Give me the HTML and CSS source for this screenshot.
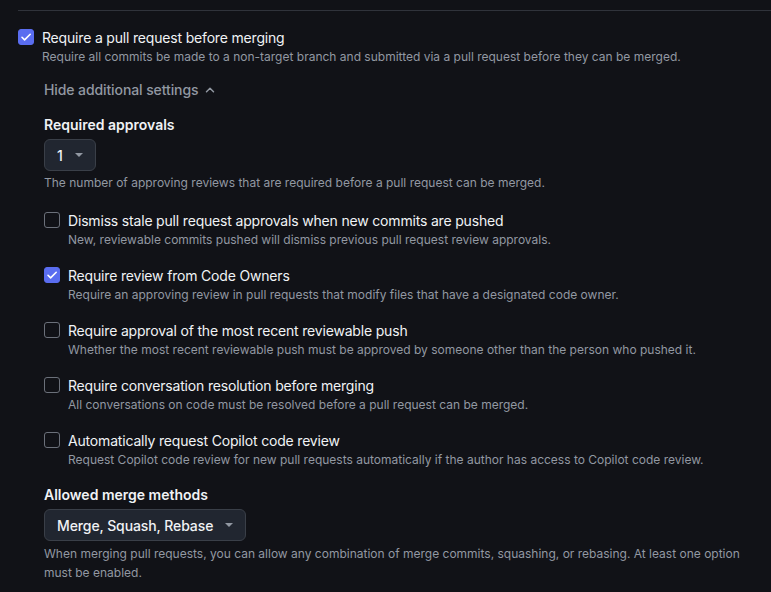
FILE: index.html
```html
<!DOCTYPE html>
<html lang="en">
<head>
<meta charset="utf-8">
<title>Branch protection</title>
<link rel="stylesheet" href="styles.css">
</head>
<body>
<div class="page">
  <div class="divider"></div>
  <div class="main-row">
    <span class="cb checked"><svg viewBox="0 0 16 16" width="16" height="16"><path d="M4 8.3l2.6 2.6L12.2 5.3" fill="none" stroke="#fff" stroke-width="1.6" stroke-linecap="round" stroke-linejoin="round"/></svg></span>
    <div class="main-body">
      <div class="title">Require a pull request before merging</div>
      <div class="desc">Require all commits be made to a non-target branch and submitted via a pull request before they can be merged.</div>
    </div>
  </div>
  <div class="inner">
    <div class="toggle">Hide additional settings <svg class="chev" viewBox="0 0 12 12" width="12" height="12"><path d="M2.5 7.8L6 4.3l3.5 3.5" fill="none" stroke="currentColor" stroke-width="1.5" stroke-linecap="round" stroke-linejoin="round"/></svg></div>

    <div class="heading">Required approvals</div>
    <button class="select"><span>1</span><span class="caret"></span></button>
    <div class="desc note">The number of approving reviews that are required before a pull request can be merged.</div>

    <div class="opts">
      <div class="opt">
        <span class="cb"></span>
        <div>
          <div class="title">Dismiss stale pull request approvals when new commits are pushed</div>
          <div class="desc">New, reviewable commits pushed will dismiss previous pull request review approvals.</div>
        </div>
      </div>
      <div class="opt">
        <span class="cb checked"><svg viewBox="0 0 16 16" width="16" height="16"><path d="M4 8.3l2.6 2.6L12.2 5.3" fill="none" stroke="#fff" stroke-width="1.6" stroke-linecap="round" stroke-linejoin="round"/></svg></span>
        <div>
          <div class="title">Require review from Code Owners</div>
          <div class="desc">Require an approving review in pull requests that modify files that have a designated code owner.</div>
        </div>
      </div>
      <div class="opt">
        <span class="cb"></span>
        <div>
          <div class="title">Require approval of the most recent reviewable push</div>
          <div class="desc">Whether the most recent reviewable push must be approved by someone other than the person who pushed it.</div>
        </div>
      </div>
      <div class="opt">
        <span class="cb"></span>
        <div>
          <div class="title">Require conversation resolution before merging</div>
          <div class="desc">All conversations on code must be resolved before a pull request can be merged.</div>
        </div>
      </div>
      <div class="opt">
        <span class="cb"></span>
        <div>
          <div class="title">Automatically request Copilot code review</div>
          <div class="desc">Request Copilot code review for new pull requests automatically if the author has access to Copilot code review.</div>
        </div>
      </div>
    </div>

    <div class="heading merge-h">Allowed merge methods</div>
    <button class="select"><span>Merge, Squash, Rebase</span><span class="caret"></span></button>
    <div class="desc note wrap">When merging pull requests, you can allow any combination of merge commits, squashing, or rebasing. At least one option must be enabled.</div>
  </div>
</div>
</body>
</html>
```
FILE: styles.css
```css
html, body {
  margin: 0;
  padding: 0;
  background: #111217;
}
body {
  font-family: Inter, "Noto Sans", "Liberation Sans", sans-serif;
  color: #eef0f4;
  font-size: 14px;
}
.page {
  padding-left: 18px;
  width: 753px;
  overflow: hidden;
}
.divider {
  margin-top: 10px;
  height: 1px;
  background: #30333b;
}
.main-row {
  display: flex;
  gap: 8px;
  margin-top: 17px;
}
.cb {
  flex: none;
  width: 16px;
  height: 16px;
  box-sizing: border-box;
  border: 1px solid #6b707a;
  border-radius: 3px;
  display: block;
  margin-top: 1px;
}
.cb.checked {
  background: #5a6df0;
  border-color: #5a6df0;
}
.cb svg {
  display: block;
  margin: -1px;
}
.title {
  font-size: 14px;
  line-height: 20px;
  font-weight: 400;
  letter-spacing: -0.18px;
  color: #f0f2f5;
  white-space: nowrap;
}
.desc {
  font-size: 12px;
  line-height: 18px;
  color: #9298a2;
  white-space: nowrap;
}
.inner {
  margin-left: 26px;
}
.toggle {
  margin-top: 14px;
  font-size: 14px;
  line-height: 20px;
  font-weight: 500;
  letter-spacing: -0.1px;
  color: #9298a2;
  display: flex;
  align-items: center;
  gap: 6px;
}
.chev {
  display: block;
}
.heading {
  margin-top: 15px;
  font-weight: 600;
  font-size: 14px;
  line-height: 20px;
  color: #f0f2f5;
}
.select {
  margin-top: 4px;
  height: 32px;
  display: inline-flex;
  align-items: center;
  gap: 12px;
  padding: 0 12px;
  background: #212630;
  border: 1px solid #3a3f48;
  border-radius: 6px;
  color: #f0f2f5;
  font-family: inherit;
  font-size: 14px;
  font-weight: 500;
  letter-spacing: -0.1px;
}
.caret {
  width: 0;
  height: 0;
  border-left: 4px solid transparent;
  border-right: 4px solid transparent;
  border-top: 4px solid #9298a2;
}
.note {
  margin-top: 3px;
}
.opts {
  margin-top: 19px;
  display: flex;
  flex-direction: column;
  gap: 17px;
}
.opt {
  display: flex;
  gap: 8px;
}
.merge-h {
  margin-top: 16px;
}
.wrap {
  white-space: normal;
  line-height: 19px;
  width: 705px;
}
```
